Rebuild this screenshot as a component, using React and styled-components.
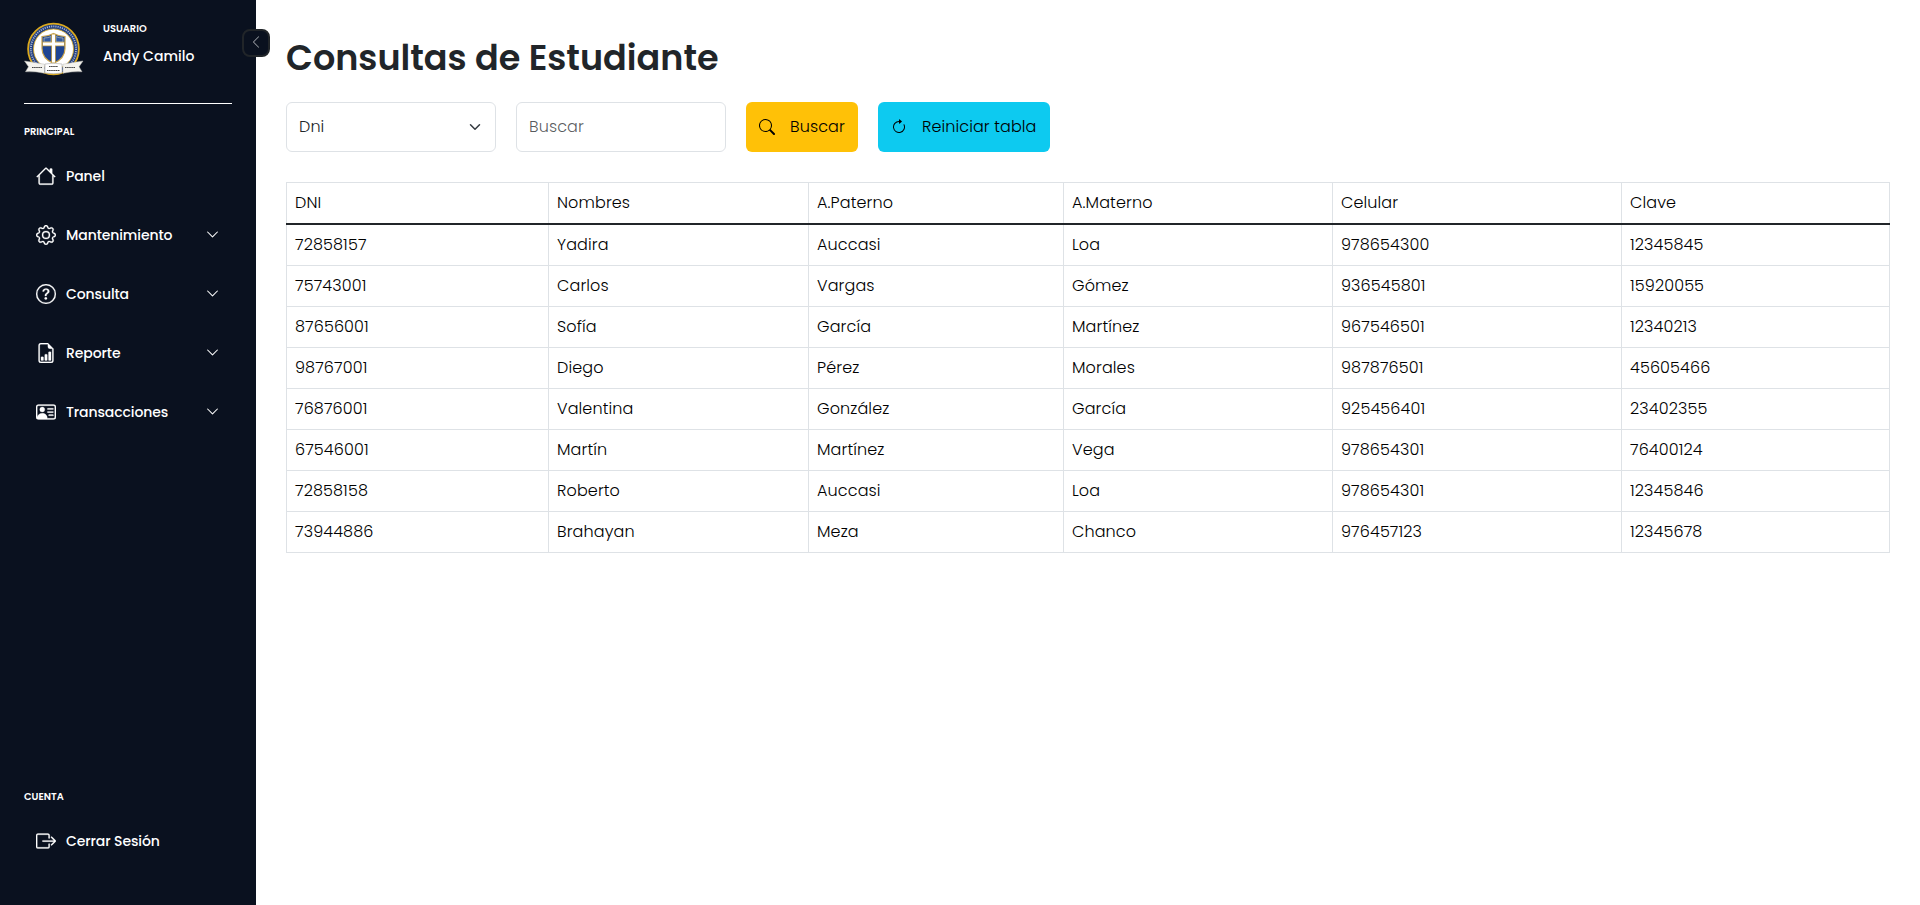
import React from "react";
import styled, { createGlobalStyle } from "styled-components";
import {
  BsHouse, BsGear, BsQuestionCircle, BsFileEarmarkBarGraph, BsPersonVcard,
  BsBoxArrowRight, BsChevronDown, BsChevronLeft, BsSearch, BsArrowClockwise,
} from "react-icons/bs";

const GlobalStyle = createGlobalStyle`
  * { box-sizing: border-box; }
  body { margin: 0; background: #fff; color: #212529; font-family: Poppins, Inter, "Liberation Sans", sans-serif; }
`;

const Page = styled.div`
  display: flex;
  height: 905px;
  overflow: hidden;
`;

const Sidebar = styled.aside`
  position: relative;
  display: flex;
  flex-direction: column;
  flex: 0 0 256px;
  padding: 18px 24px 41px;
  background: #0a111f;
  color: #fff;
`;

const Toggle = styled.button`
  position: absolute;
  top: 29px;
  right: -14px;
  display: grid;
  place-items: center;
  width: 28px;
  height: 28px;
  padding: 0 0 2px;
  border: 2px solid #212529;
  border-radius: 8px;
  background: #0a111f;
  color: #9a9da3;
  font-size: 14px;
`;

const Profile = styled.header`
  display: flex;
  height: 86px;
  border-bottom: 1px solid #fff;
`;

const Crest = styled.svg`
  width: 60px;
  height: 60px;
  margin-right: 19px;
`;

const UserInfo = styled.div`
  display: flex;
  flex-direction: column;
  padding-top: 3px;
`;

const Caption = styled.span`
  font-size: 9.9px;
  font-weight: 600;
  line-height: 15px;
`;

const UserName = styled.span`
  margin-top: 9px;
  font-size: 14px;
  font-weight: 500;
  line-height: 22px;
`;

const Nav = styled.nav`
  display: flex;
  flex-direction: column;
  padding-top: ${(p) => (p.$bottom ? 0 : 20)}px;
  margin-top: ${(p) => (p.$bottom ? "auto" : 0)};
`;

const NavList = styled.div`
  display: flex;
  flex-direction: column;
  gap: 14px;
  margin-top: 15px;
`;

const NavItem = styled.a`
  display: flex;
  align-items: center;
  height: 45px;
  padding: 0 12px;
  font-size: 14px;
  font-weight: 500;

  svg { flex: none; }
  > svg:first-child { width: 20px; height: 20px; margin: -1px 10px 0 0; stroke: currentColor; stroke-width: 0.2; }
  > svg:last-child:not(:first-child) { width: 13px; height: 13px; margin: -3px 1px 0 auto; stroke: currentColor; stroke-width: 0.3; }
`;

const NavLabel = styled.span`
  white-space: nowrap;
  letter-spacing: -0.1px;
`;

const Main = styled.main`
  flex: 1;
  padding: 36px 30px 0;
`;

const Title = styled.h1`
  margin: 0 0 22px;
  font-size: 35px;
  font-weight: 600;
  line-height: 44px;
`;

const Toolbar = styled.div`
  display: flex;
  gap: 20px;
  margin-bottom: 30px;
`;

const Field = styled.div`
  display: flex;
  align-items: center;
  justify-content: space-between;
  width: 210px;
  height: 50px;
  padding: 0 14px 1px 12px;
  border: 1px solid #dee2e6;
  border-radius: 6px;
  color: ${(p) => (p.$placeholder ? "rgba(33, 37, 41, 0.75)" : "#212529")};
  font-size: 16px;
  font-weight: 300;
  letter-spacing: 0.1px;
`;

const Button = styled.button`
  display: flex;
  align-items: center;
  width: ${(p) => p.$width}px;
  height: 50px;
  padding: 0 0 1px 13px;
  border: 0;
  border-radius: 6px;
  background: ${(p) => p.$color};
  color: #000;
  font-family: inherit;
  font-size: 16px;
  font-weight: 300;
  letter-spacing: 0.1px;
  white-space: nowrap;

  svg { width: 16px; height: 16px; margin-right: 15px; flex: none; }
`;

const Table = styled.table`
  width: 1604px;
  border-collapse: collapse;
  table-layout: fixed;
`;

const Cell = styled.td`
  padding: 0 8px;
  border: 1px solid #dee2e6;
  ${(p) => p.$head && "border-bottom: 2px solid #212529;"}
  color: #000;
  font-size: 16px;
  font-weight: 300;
  line-height: 24px;
  letter-spacing: 0.12px;
`;

const Row = styled.tr`
  height: 41px;

  tbody &:first-child { height: 42px; }
`;

const Logo = () => (
  <Crest viewBox="0 0 60 60">
    <circle cx="29.5" cy="31" r="25.4" fill="#233f80" stroke="#dba91d" strokeWidth="1.8" />
    <circle cx="29.5" cy="31" r="22.6" fill="none" stroke="#aab8d3" strokeWidth="1.8" strokeDasharray="1.1 1.1" />
    <circle cx="29.5" cy="31" r="20" fill="#fff" stroke="#dba91d" strokeWidth="0.8" />
    <path d="M18 18.500q6 0 11.500-3q5.500 3 11.500 3v12q0 10-11.500 15q-11.500-5-11.500-15z" fill="#1f4592" stroke="#c9a34a" strokeWidth="1.2" />
    <path d="M20 20q4 0 7-1.500v5.500h-7zM32 18.500q3 1.500 7 1.500v4h-7z" fill="#3158a0" stroke="#a8b4b8" strokeWidth="0.8" />
    <path d="M29.500 16v29M18.500 26h22" stroke="#c9a34a" strokeWidth="4.600" />
    <path d="M29.500 16.500v28M19 26h21" stroke="#fff" strokeWidth="3" />
    <path d="M0.500 43l8 1.200l12 2v9q-9-2-19-1.500l3-5zM59 43l-8 1.200l-12 2v9q9-2 19-1.500l-3-5z" fill="#f4f3ee" stroke="#bcbcb8" strokeWidth="0.5" />
    <path d="M23 53.500h13l-3 3.500h-7z" fill="#dba91d" />
    <path d="M21 46q8.500-1.500 17 0v9q-8.500 1.500-17 0z" fill="#fff" stroke="#aaa" strokeWidth="0.6" />
    <path d="M8 49.500h10M41 49.500h10M25 48.500h9M23 52.500h13" stroke="#444" strokeWidth="1" strokeDasharray="1.600 0.500" />
  </Crest>
);

const items = [
  { label: "Panel", Icon: BsHouse },
  { label: "Mantenimiento", Icon: BsGear, more: true },
  { label: "Consulta", Icon: BsQuestionCircle, more: true },
  { label: "Reporte", Icon: BsFileEarmarkBarGraph, more: true },
  { label: "Transacciones", Icon: BsPersonVcard, more: true },
];

const columns = [
  ["DNI", 262], ["Nombres", 260], ["A.Paterno", 255],
  ["A.Materno", 269], ["Celular", 289], ["Clave", 268],
];

const students = [
  ["72858157", "Yadira", "Auccasi", "Loa", "978654300", "12345845"],
  ["75743001", "Carlos", "Vargas", "Gómez", "936545801", "15920055"],
  ["87656001", "Sofía", "García", "Martínez", "967546501", "12340213"],
  ["98767001", "Diego", "Pérez", "Morales", "987876501", "45605466"],
  ["76876001", "Valentina", "González", "García", "925456401", "23402355"],
  ["67546001", "Martín", "Martínez", "Vega", "978654301", "76400124"],
  ["72858158", "Roberto", "Auccasi", "Loa", "978654301", "12345846"],
  ["73944886", "Brahayan", "Meza", "Chanco", "976457123", "12345678"],
];

export default function App() {
  return (
    <Page>
      <GlobalStyle />
      <Sidebar>
        <Toggle aria-label="Contraer menú"><BsChevronLeft /></Toggle>
        <Profile>
          <Logo />
          <UserInfo>
            <Caption>USUARIO</Caption>
            <UserName>Andy Camilo</UserName>
          </UserInfo>
        </Profile>
        <Nav>
          <Caption>PRINCIPAL</Caption>
          <NavList>
            {items.map(({ label, Icon, more }) => (
              <NavItem key={label}>
                <Icon />
                <NavLabel>{label}</NavLabel>
                {more && <BsChevronDown />}
              </NavItem>
            ))}
          </NavList>
        </Nav>
        <Nav $bottom>
          <Caption>CUENTA</Caption>
          <NavList>
            <NavItem>
              <BsBoxArrowRight />
              <NavLabel>Cerrar Sesión</NavLabel>
            </NavItem>
          </NavList>
        </Nav>
      </Sidebar>
      <Main>
        <Title>Consultas de Estudiante</Title>
        <Toolbar>
          <Field>
            Dni
            <svg width="12" height="12" viewBox="0 0 16 16" fill="none" stroke="#343a40" strokeWidth="2" strokeLinecap="round" strokeLinejoin="round">
              <path d="m2 5 6 6 6-6" />
            </svg>
          </Field>
          <Field $placeholder>Buscar</Field>
          <Button $color="#ffc107" $width={112}><BsSearch />Buscar</Button>
          <Button $color="#0dcaf0" $width={172}><BsArrowClockwise />Reiniciar tabla</Button>
        </Toolbar>
        <Table>
          <colgroup>
            {columns.map(([name, width]) => <col key={name} width={width} />)}
          </colgroup>
          <thead>
            <Row>
              {columns.map(([name]) => <Cell as="th" align="left" $head key={name}>{name}</Cell>)}
            </Row>
          </thead>
          <tbody>
            {students.map((student) => (
              <Row key={student[0]}>
                {student.map((value, i) => (
                  <Cell key={i}>{value}</Cell>
                ))}
              </Row>
            ))}
          </tbody>
        </Table>
      </Main>
    </Page>
  );
}
